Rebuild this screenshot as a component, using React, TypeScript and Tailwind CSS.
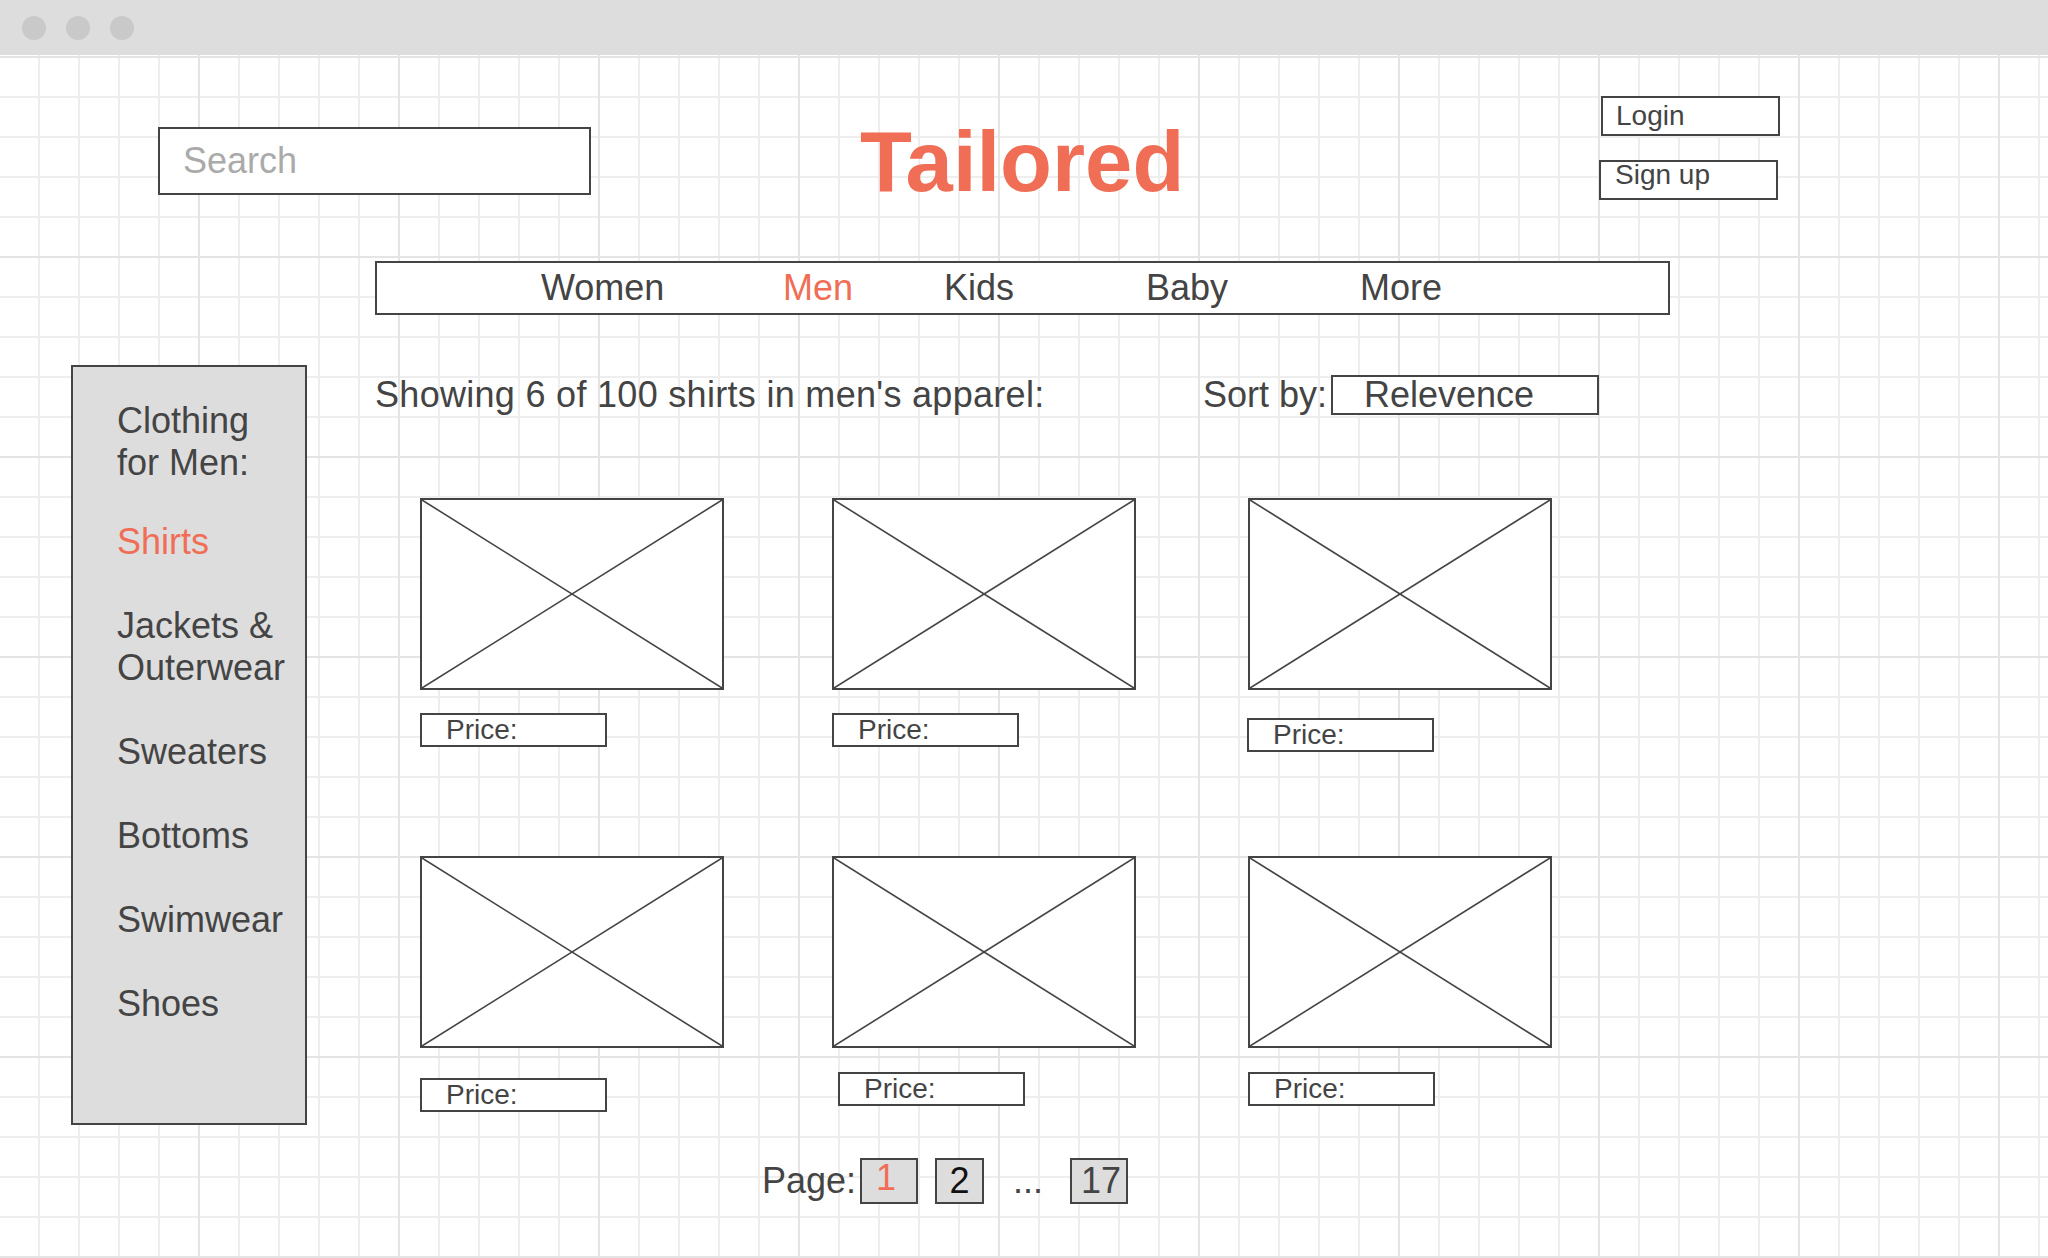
import { ReactNode } from "react";

const font = "font-['Liberation_Sans',Arial,sans-serif]";

const ImageBox = () => (
    <div className="w-[304px] h-[192px] border-2 border-[#444444] bg-white">
        <svg className="w-full h-full block" viewBox="0 0 100 100" preserveAspectRatio="none">
            <line x1="0" y1="0" x2="100" y2="100" stroke="#444444" strokeWidth="1.6" vectorEffect="non-scaling-stroke" />
            <line x1="100" y1="0" x2="0" y2="100" stroke="#444444" strokeWidth="1.6" vectorEffect="non-scaling-stroke" />
        </svg>
    </div>
);

const PriceBox = ({ className }: { className: string }) => (
    <div className={`w-[187px] h-[34px] border-2 border-[#444444] bg-white flex items-center pl-[24px] text-[28px] leading-none text-[#444444] ${className}`}>
        Price:
    </div>
);

const Card = ({ className, priceClass }: { className: string; priceClass: string }) => (
    <div className={`flex flex-col items-start ${className}`}>
        <ImageBox />
        <PriceBox className={priceClass} />
    </div>
);

const PageBox = ({ children, className }: { children: ReactNode; className: string }) => (
    <div className={`h-[46px] border-2 border-[#444444] bg-[#dddddd] flex items-center justify-center text-[36px] leading-none ${className}`}>
        {children}
    </div>
);

const NAV = [
    { label: "Women", w: "w-[242px]", active: false },
    { label: "Men", w: "w-[161px]", active: true },
    { label: "Kids", w: "w-[202px]", active: false },
    { label: "Baby", w: "w-[214px]", active: false },
    { label: "More", w: "w-[150px]", active: false },
];

const SIDE = ["Shirts", "Jackets &|Outerwear", "Sweaters", "Bottoms", "Swimwear", "Shoes"];

export default function App() {
    return (
        <div className={`w-full h-[1258px] overflow-hidden flex flex-col bg-white text-[#444444] ${font}`}>
            {/* window chrome */}
            <div className="h-[55px] shrink-0 bg-[#dddddd] flex items-center gap-[20px] pl-[22px]">
                <span className="w-[24px] h-[24px] rounded-full bg-[#c9c9c9]" />
                <span className="w-[24px] h-[24px] rounded-full bg-[#c9c9c9]" />
                <span className="w-[24px] h-[24px] rounded-full bg-[#c9c9c9]" />
            </div>

            {/* grid canvas */}
            <div className="flex-1 pt-[41px] bg-white bg-[linear-gradient(to_right,#e4e4e4_2px,transparent_2px),linear-gradient(to_bottom,#e4e4e4_2px,transparent_2px),linear-gradient(to_right,#eeeeee_2px,transparent_2px),linear-gradient(to_bottom,#eeeeee_2px,transparent_2px)] bg-size-[200px_200px,200px_200px,40px_40px,40px_40px] bg-position-[198px_1px,198px_1px,38px_1px,38px_1px]">
                {/* header */}
                <div className="flex items-start h-[165px]">
                    <div className="ml-[158px] mt-[31px] w-[433px] h-[68px] border-2 border-[#444444] bg-white flex items-center pl-[23px] text-[36px] leading-none text-[#aaaaaa]">
                        Search
                    </div>
                    <div className="ml-[269px] mt-[23px] w-[322px] text-[85px] font-bold leading-none text-[#f06e56] whitespace-nowrap">
                        Tailored
                    </div>
                    <div className="ml-[419px] flex flex-col items-start">
                        <div className="w-[179px] h-[40px] border-2 border-[#444444] bg-white flex items-center pl-[13px] text-[28px] leading-none">
                            Login
                        </div>
                        <div className="mt-[24px] ml-[-2px] w-[179px] h-[40px] border-2 border-[#444444] bg-white flex items-start pl-[14px] text-[28px] leading-[26px]">
                            Sign up
                        </div>
                    </div>
                </div>

                {/* category nav */}
                <div className="ml-[375px] w-[1295px] h-[54px] border-2 border-[#444444] bg-white flex items-center pl-[164px] text-[36px] leading-none">
                    {NAV.map((n) => (
                        <span key={n.label} className={`${n.w} ${n.active ? "text-[#f06e56]" : ""}`}>
                            {n.label}
                        </span>
                    ))}
                </div>

                <div className="flex items-start mt-[50px]">
                    {/* sidebar */}
                    <div className="ml-[71px] w-[236px] h-[760px] shrink-0 border-2 border-[#444444] bg-[#dddddd] pt-[33px] pl-[44px] text-[36px] leading-[42px]">
                        <div className="mb-[37px]">
                            <div>Clothing</div>
                            <div>for Men:</div>
                        </div>
                        <div className="flex flex-col gap-[42px]">
                            {SIDE.map((s, i) => (
                                <div key={s} className={i === 0 ? "text-[#f06e56]" : ""}>
                                    {s.split("|").map((line) => (
                                        <div key={line}>{line}</div>
                                    ))}
                                </div>
                            ))}
                        </div>
                    </div>

                    {/* listing */}
                    <div className="ml-[68px] flex flex-col items-start">
                        <div className="mt-[10px] h-[40px] flex items-center text-[36px] leading-none">
                            <span className="w-[828px] tracking-[0.3px]">Showing 6 of 100 shirts in men's apparel:</span>
                            <span className="w-[128px]">Sort by:</span>
                            <div className="w-[268px] h-[40px] border-2 border-[#444444] bg-white flex items-center pl-[31px]">
                                Relevence
                            </div>
                        </div>

                        <div className="mt-[83px] h-[358px] flex items-start">
                            <Card className="ml-[45px]" priceClass="mt-[23px]" />
                            <Card className="ml-[108px]" priceClass="mt-[23px]" />
                            <Card className="ml-[112px]" priceClass="mt-[28px] ml-[-1px]" />
                        </div>

                        <div className="flex items-start">
                            <Card className="ml-[45px]" priceClass="mt-[30px]" />
                            <Card className="ml-[108px]" priceClass="mt-[24px] ml-[6px]" />
                            <Card className="ml-[112px]" priceClass="mt-[24px]" />
                        </div>

                        <div className="mt-[46px] ml-[387px] flex items-center text-[36px] leading-none">
                            <span className="mr-[4px]">Page:</span>
                            <PageBox className="w-[58px] text-[#f06e56] pb-[6px] pr-[6px]">1</PageBox>
                            <PageBox className="ml-[17px] w-[49px] text-[#111111]">2</PageBox>
                            <span className="ml-[29px] w-[57px]">...</span>
                            <PageBox className="w-[58px] pl-[4px]">17</PageBox>
                        </div>
                    </div>
                </div>
            </div>
        </div>
    );
}
